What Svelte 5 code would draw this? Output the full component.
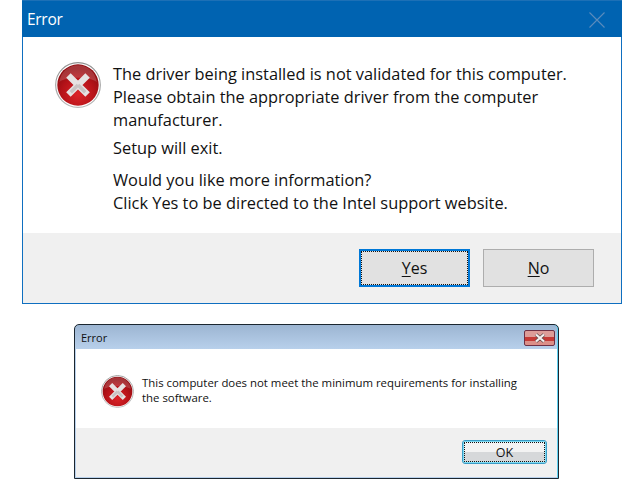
<script>
	const firstMessage = [
		['The driver being installed is not validated for this computer.', 'Please obtain the appropriate driver from the computer', 'manufacturer.'],
		['Setup will exit.'],
		['Would you like more information?', 'Click Yes to be directed to the Intel support website.']
	];
</script>

{#snippet errorIcon(size)}
	<svg class="icon" width={size} height={size} viewBox="0 0 48 48" aria-hidden="true">
		<defs>
			<radialGradient id="disc-{size}" cx="50%" cy="72%" r="62%">
				<stop offset="0" stop-color="#dc2328" />
				<stop offset="0.65" stop-color="#b41218" />
				<stop offset="1" stop-color="#930d12" />
			</radialGradient>
			<linearGradient id="rim-{size}" x1="0" y1="0" x2="0" y2="1">
				<stop offset="0" stop-color="#8f8f8f" />
				<stop offset="1" stop-color="#b8b8b8" />
			</linearGradient>
		</defs>
		<circle cx="24" cy="24" r="23.300" fill="#fff" stroke="url(#rim-{size})" stroke-width="1.200" />
		<circle cx="24" cy="24" r="21.600" fill="url(#disc-{size})" />
		<path d="M4.500 21a19.600 19.600 0 0 1 39 0c-6-6-33-6-39 0z" fill="#fff" opacity=".17" />
		<path d="M14 14 34 34M34 14 14 34" stroke="#e6e2e2" stroke-width="6.600" fill="none" />
		<path d="M24 24 31.500 31.500M24 24 16.500 31.500" stroke="#c9c3c3" stroke-width="3.600" fill="none" />
	</svg>
{/snippet}

<div class="page">
	<section class="win10">
		<header class="win10-title">
			<span>Error</span>
			<svg class="win10-close" width="16" height="16" viewBox="0 0 16 16" aria-hidden="true">
				<path d="M.5.500 15.500 15.500M15.500.500.500 15.500" stroke="#5a8cbc" stroke-width="1.100" fill="none" />
			</svg>
		</header>
		<div class="win10-body">
			{@render errorIcon(46)}
			<div class="win10-text">
				{#each firstMessage as para}
					<p>
						{#each para as line}
							<span>{line}</span>
						{/each}
					</p>
				{/each}
			</div>
		</div>
		<footer class="win10-foot">
			<button class="btn10 focused"><span><u>Y</u>es</span></button>
			<button class="btn10"><span><u>N</u>o</span></button>
		</footer>
	</section>

	<section class="win7">
		<header class="win7-title">
			<span>Error</span>
			<div class="win7-close">
				<svg width="16" height="10" viewBox="0 0 16 10" aria-hidden="true">
					<path d="M4 1.500 12 8.500M12 1.500 4 8.500" stroke="#5c4a4a" stroke-width="3.600" fill="none" />
					<path d="M4 1.500 12 8.500M12 1.500 4 8.500" stroke="#f4f0f0" stroke-width="2.200" fill="none" />
				</svg>
			</div>
		</header>
		<div class="win7-inner">
			<div class="win7-body">
				{@render errorIcon(33)}
				<p>
					<span>This computer does not meet the minimum requirements for installing</span>
					<span>the software.</span>
				</p>
			</div>
			<footer class="win7-foot">
				<button class="btn7"><span>OK</span></button>
			</footer>
		</div>
	</section>
</div>

<style>
	:global(body) {
		margin: 0;
		background: #fff;
	}
	.page {
		width: 640px;
		height: 479px;
		overflow: hidden;
		display: flex;
		flex-direction: column;
		font-family: 'Open Sans', 'Liberation Sans', sans-serif;
		color: #111;
	}
	p {
		margin: 0;
	}
	p span {
		display: block;
		white-space: nowrap;
	}
	button {
		font-family: inherit;
		color: #111;
		padding: 0;
		box-sizing: border-box;
	}
	u {
		text-underline-offset: 2px;
	}
	.icon {
		flex: none;
	}

	.win10 {
		width: 600px;
		height: 304px;
		margin-left: 22px;
		box-sizing: border-box;
		border: solid #0f6fc0;
		border-width: 0 1px 1px;
		display: flex;
		flex-direction: column;
		flex: none;
	}
	.win10-title {
		height: 37px;
		margin: 0 -1px;
		box-sizing: border-box;
		background: #0063b1;
		border-top: 1px solid #1d70b6;
		display: flex;
		align-items: center;
		justify-content: space-between;
		padding: 0 17px 0 5px;
		color: #fff;
		font-size: 15.500px;
		letter-spacing: -0.300px;
	}
	.win10-close {
		margin-top: 1px;
	}
	.win10-body {
		flex: 1;
		display: flex;
		padding: 25px 0 0 32px;
		gap: 12px;
		background: #fff;
	}
	.win10-text {
		font-size: 16.360px;
		line-height: 23px;
		margin-top: 1px;
	}
	.win10-text p {
		margin-bottom: 5px;
	}
	.win10-text p:nth-child(2) {
		margin-bottom: 9px;
	}
	.win10-foot {
		height: 70px;
		box-sizing: border-box;
		background: #f0f0f0;
		display: flex;
		justify-content: flex-end;
		gap: 13px;
		padding: 16px 27px 0 0;
	}
	.btn10 {
		width: 111px;
		height: 38px;
		background: #e1e1e1;
		border: 1px solid #adadad;
		font-size: 16px;
		display: flex;
		align-items: center;
		justify-content: center;
	}
	.btn10.focused {
		border: 2px solid #0078d7;
		outline: 1px dotted #111;
		outline-offset: -3px;
	}

	.win7 {
		width: 485px;
		height: 155px;
		margin: 20px 0 0 74px;
		box-sizing: border-box;
		border: 1px solid #1b2630;
		border-radius: 5px 5px 0 0;
		background: linear-gradient(#9cb5d2, #b9d1ec 25px);
		display: flex;
		flex-direction: column;
		flex: none;
		box-shadow: inset -1px 0 0 #5fd0f0;
	}
	.win7-title {
		height: 24px;
		flex: none;
		display: flex;
		align-items: flex-start;
		justify-content: space-between;
		padding: 0 3px 0 6px;
		font-size: 11px;
		line-height: 25px;
	}
	.win7-close {
		width: 31px;
		height: 16px;
		margin-top: 5px;
		box-sizing: border-box;
		border: 1px solid #6e3044;
		border-radius: 2px;
		background: linear-gradient(#dd9c98 0 45%, #c53a36 45% 70%, #dc8f88 70%);
		display: flex;
		align-items: center;
		justify-content: center;
	}
	.win7-inner {
		flex: 1;
		margin: 0 1px 1px 1px;
		display: flex;
		flex-direction: column;
		background: #fff;
	}
	.win7-body {
		height: 79px;
		box-sizing: border-box;
		display: flex;
		padding: 26px 0 0 25px;
		gap: 8px;
	}
	.win7-body p {
		font-size: 11.400px;
		line-height: 15px;
	}
	.win7-foot {
		flex: 1;
		background: #f0f0f0;
		display: flex;
		justify-content: flex-end;
		padding: 12px 10px 0 0;
	}
	.btn7 {
		width: 85px;
		height: 24px;
		border: 1px solid #3a9cc6;
		border-radius: 3px;
		background: linear-gradient(#f3f3f3 0 50%, #d6d8da 50%);
		font-size: 12.500px;
		outline: 1px dotted #111;
		outline-offset: -3px;
		box-shadow: inset 0 0 0 1px #7fdcf4;
		display: flex;
		align-items: center;
		justify-content: center;
	}
</style>
